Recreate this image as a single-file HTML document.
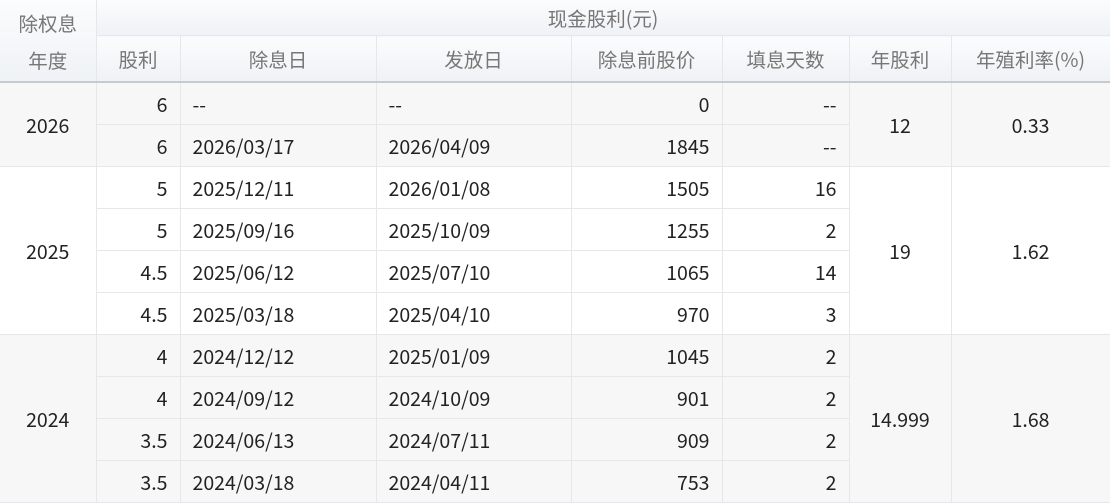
<!DOCTYPE html>
<html><head><meta charset="utf-8"><style>
body{margin:0;width:1110px;height:502px;overflow:hidden;background:#fff;font-family:"Noto Sans CJK SC","Liberation Sans",sans-serif;}
table{border-collapse:collapse;table-layout:fixed;width:1110px;font-size:19.5px;color:#222;}
td,th{border:1px solid #e6e7ea;padding:0 12px;white-space:nowrap;line-height:24px;}
th{font-weight:normal;color:#777;background:linear-gradient(#fbfcfd,#eff2f6);}
tr.h1 th{height:35px;}
tr.h2 th{height:45px;border-bottom:2px solid #c6c8d2;}
th.y{border-bottom:2px solid #c6c8d2;}
td{height:41px;}
.r{text-align:right}.l{text-align:left}.c{text-align:center}
.g td{background:#f7f7f7}
tr:first-child th{border-top:none}
th:first-child,td:first-child{border-left:none}
</style></head><body>
<table>
<colgroup><col style="width:96px"><col style="width:84px"><col style="width:196px"><col style="width:195px"><col style="width:151px"><col style="width:127px"><col style="width:102px"><col style="width:159px"></colgroup>
<tr class="h1"><th rowspan="2" class="y" style="line-height:37px;vertical-align:middle">除权息<br>年度</th><th colspan="7">现金股利(元)</th></tr>
<tr class="h2"><th>股利</th><th>除息日</th><th>发放日</th><th>除息前股价</th><th>填息天数</th><th>年股利</th><th>年殖利率(%)</th></tr>
<tr class="g"><td rowspan="2" class="c">2026</td><td class="r">6</td><td class="l">--</td><td class="l">--</td><td class="r">0</td><td class="r">--</td><td rowspan="2" class="c">12</td><td rowspan="2" class="c">0.33</td></tr>
<tr class="g"><td class="r">6</td><td class="l">2026/03/17</td><td class="l">2026/04/09</td><td class="r">1845</td><td class="r">--</td></tr>
<tr><td rowspan="4" class="c">2025</td><td class="r">5</td><td class="l">2025/12/11</td><td class="l">2026/01/08</td><td class="r">1505</td><td class="r">16</td><td rowspan="4" class="c">19</td><td rowspan="4" class="c">1.62</td></tr>
<tr><td class="r">5</td><td class="l">2025/09/16</td><td class="l">2025/10/09</td><td class="r">1255</td><td class="r">2</td></tr>
<tr><td class="r">4.5</td><td class="l">2025/06/12</td><td class="l">2025/07/10</td><td class="r">1065</td><td class="r">14</td></tr>
<tr><td class="r">4.5</td><td class="l">2025/03/18</td><td class="l">2025/04/10</td><td class="r">970</td><td class="r">3</td></tr>
<tr class="g"><td rowspan="4" class="c">2024</td><td class="r">4</td><td class="l">2024/12/12</td><td class="l">2025/01/09</td><td class="r">1045</td><td class="r">2</td><td rowspan="4" class="c">14.999</td><td rowspan="4" class="c">1.68</td></tr>
<tr class="g"><td class="r">4</td><td class="l">2024/09/12</td><td class="l">2024/10/09</td><td class="r">901</td><td class="r">2</td></tr>
<tr class="g"><td class="r">3.5</td><td class="l">2024/06/13</td><td class="l">2024/07/11</td><td class="r">909</td><td class="r">2</td></tr>
<tr class="g"><td class="r">3.5</td><td class="l">2024/03/18</td><td class="l">2024/04/11</td><td class="r">753</td><td class="r">2</td></tr>
</table>
</body></html>
